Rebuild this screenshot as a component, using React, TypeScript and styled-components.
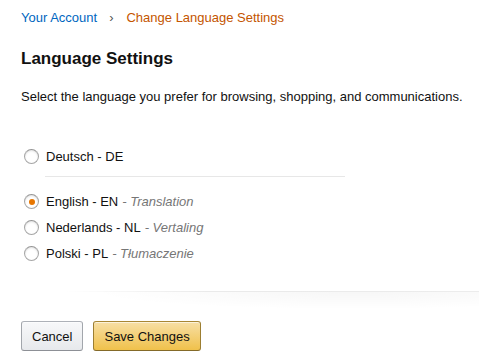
import React, { useState } from "react";
import styled, { createGlobalStyle } from "styled-components";

const GlobalStyle = createGlobalStyle`
  html, body { margin: 0; padding: 0; background: #fff; }
  body {
    font-family: Arial, "Liberation Sans", sans-serif;
    font-size: 13px;
    line-height: 19px;
    color: #111;
  }
  * { box-sizing: border-box; }
`;

const Page = styled.div`
  padding: 8px 0 0 21px;
  display: flex;
  flex-direction: column;
`;

const Breadcrumb = styled.nav`
  display: flex;
  align-items: center;
  height: 19px;
`;

const Crumb = styled.span<{ $active?: boolean }>`
  color: ${(p) => (p.$active ? "#c45500" : "#0066c0")};
`;

const Sep = styled.span`
  color: #555;
  margin: 0 13px 0 12px;
  font-size: 13px;
`;

const Heading = styled.h1`
  margin: 21px 0 0 0;
  font-size: 17px;
  line-height: 21px;
  font-weight: 700;
`;

const Description = styled.p`
  margin: 18px 0 0 0;
`;

const Options = styled.div`
  margin-top: 41px;
  display: flex;
  flex-direction: column;
  padding-left: 3px;
`;

const Option = styled.label<{ $gap?: number }>`
  display: flex;
  align-items: center;
  height: 19px;
  margin-top: ${(p) => p.$gap ?? 0}px;
  cursor: pointer;
`;

const Radio = styled.span<{ $checked?: boolean }>`
  width: 15px;
  height: 15px;
  border-radius: 50%;
  border: 1px solid #a6a6a6;
  border-top-color: #949494;
  box-shadow: inset 0 1px 2px rgba(0, 0, 0, 0.12);
  background: #fff;
  display: flex;
  align-items: center;
  justify-content: center;
  margin-right: 7px;
  flex: none;
  &::after {
    content: "";
    display: ${(p) => (p.$checked ? "block" : "none")};
    width: 6px;
    height: 6px;
    border-radius: 50%;
    background: #e77600;
  }
`;

const Hint = styled.span`
  color: #767676;
  font-style: italic;
  margin-left: 4px;
`;

const Divider = styled.hr`
  border: 0;
  height: 1px;
  background: #e7e7e7;
  width: 300px;
  margin: 10px 0 15px 21px;
`;

const SectionDivider = styled.div`
  margin: 28px 0 0 44px;
  height: 20px;
  background:
    linear-gradient(to right, rgba(238, 238, 238, 0), rgba(232, 232, 232, 0.9) 35%, #ececec) top / 100% 1px no-repeat,
    radial-gradient(ellipse at 70% 0%, rgba(0, 0, 0, 0.035), rgba(0, 0, 0, 0) 65%);
`;

const Actions = styled.div`
  display: flex;
  gap: 10px;
  margin-top: 10px;
`;

const Button = styled.button<{ $primary?: boolean }>`
  height: 30px;
  padding: 0 10px;
  border-radius: 3px;
  font-family: Arial, "Liberation Sans", sans-serif;
  font-size: 13px;
  color: #111;
  cursor: pointer;
  border: 1px solid;
  border-color: ${(p) =>
    p.$primary ? "#a88734 #9c7e31 #846a29" : "#adb1b8 #a2a6ac #8d9096"};
  background: ${(p) =>
    p.$primary
      ? "linear-gradient(to bottom, #f7dfa5, #f0c14b)"
      : "linear-gradient(to bottom, #f7f8fa, #e7e9ec)"};
  box-shadow: 0 1px 0 rgba(255, 255, 255, 0.6) inset;
`;

const languages = [
  { code: "de", name: "Deutsch - DE", hint: "" },
  { code: "en", name: "English - EN", hint: "Translation" },
  { code: "nl", name: "Nederlands - NL", hint: "Vertaling" },
  { code: "pl", name: "Polski - PL", hint: "Tłumaczenie" },
];

export default function App() {
  const [selected, setSelected] = useState("en");
  const [first, ...rest] = languages;
  return (
    <>
      <GlobalStyle />
      <Page>
        <Breadcrumb>
          <Crumb>Your Account</Crumb>
          <Sep>›</Sep>
          <Crumb $active>Change Language Settings</Crumb>
        </Breadcrumb>
        <Heading>Language Settings</Heading>
        <Description>
          Select the language you prefer for browsing, shopping, and communications.
        </Description>
        <Options>
          <Option onClick={() => setSelected(first.code)}>
            <Radio $checked={selected === first.code} />
            {first.name}
          </Option>
          <Divider />
          {rest.map((l, i) => (
            <Option key={l.code} $gap={i === 0 ? 0 : 7} onClick={() => setSelected(l.code)}>
              <Radio $checked={selected === l.code} />
              {l.name}
              <Hint>- {l.hint}</Hint>
            </Option>
          ))}
        </Options>
        <SectionDivider />
        <Actions>
          <Button>Cancel</Button>
          <Button $primary>Save Changes</Button>
        </Actions>
      </Page>
    </>
  );
}
